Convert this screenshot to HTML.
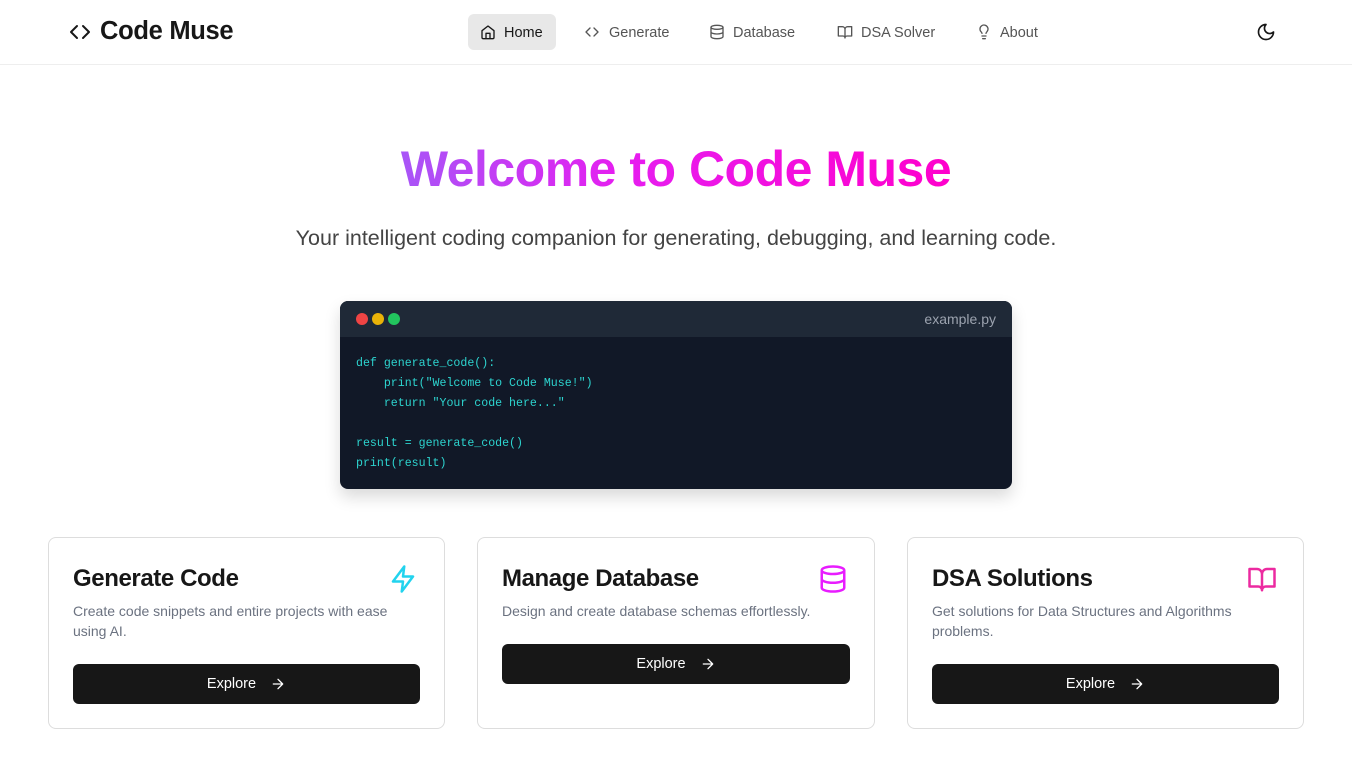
<!DOCTYPE html>
<html><head><meta charset="utf-8"><style>
*{box-sizing:border-box;margin:0;padding:0}
body{width:1352px;height:760px;overflow:hidden;background:#fff;font-family:"Liberation Sans",sans-serif;color:#171717}
header{height:65px;border-bottom:1px solid #eee;position:relative}
.logo{position:absolute;left:68px;top:17px;display:flex;align-items:center;gap:8px;font-size:25.5px;font-weight:bold;letter-spacing:-0.3px}
.nv{position:absolute;top:15px;height:36px;display:flex;align-items:center;font-size:14.5px;color:#555}
.nv svg{position:absolute;top:9px}
.pill{position:absolute;left:468px;top:14px;width:88px;height:36px;background:#e8e8e8;border-radius:6px}
.moon{position:absolute;left:1256px;top:22px}
h1{position:absolute;top:140px;width:100%;text-align:center;font-size:50px;font-weight:bold;letter-spacing:-0.5px}
h1 span{background:linear-gradient(90deg,#a855f7 0%,#e61ef0 40%,#ff00cc 100%);-webkit-background-clip:text;background-clip:text;color:transparent}
.sub{position:absolute;top:226px;width:100%;text-align:center;font-size:21.5px;color:#444}
.code{position:absolute;left:340px;top:301px;width:672px;height:188px;border-radius:8px;overflow:hidden;background:#111827;box-shadow:0 8px 16px rgba(0,0,0,.15)}
.ch{height:36px;background:#1f2937;position:relative}
.dot{position:absolute;top:12px;width:12px;height:12px;border-radius:50%}
.fn{position:absolute;right:16px;top:10px;font-size:14px;color:#9ca3af}
pre{padding:17px 16px;font-family:"Liberation Mono",monospace;font-size:11.6px;line-height:20px;color:#2dd4cf}
.card{position:absolute;top:537px;width:397px;height:192px;border:1px solid #ddd;border-radius:8px;padding:24px}
.card h3{font-size:24px;font-weight:600;letter-spacing:-0.4px;margin-top:3px}
.card p{font-size:14px;color:#6b7280;line-height:20px;margin-top:8px;height:40px}
.card p.one{height:20px}
.card .ic{position:absolute;right:26px;top:26px}
.btn{margin-top:23px;height:40px;background:#171717;color:#fff;border-radius:6px;display:flex;align-items:center;justify-content:center;gap:14px;font-size:14.5px}
</style></head><body>
<header>
<div class="logo"><svg width="24" height="24" viewBox="0 0 24 24" fill="none" stroke="#171717" stroke-width="2" stroke-linecap="round" stroke-linejoin="round"><path d="M9 6l-6 6 6 6M15 6l6 6-6 6"/></svg>Code Muse</div>
<div class="pill"></div>
<div class="nv" style="left:480px;color:#171717"><svg style="left:0" width="16" height="16" viewBox="0 0 24 24" fill="none" stroke="currentColor" stroke-width="2" stroke-linejoin="round"><path d="M3 10l9-7 9 7v10a2 2 0 0 1-2 2H5a2 2 0 0 1-2-2z"/><path d="M9 22v-8h6v8"/></svg><span style="margin-left:24px">Home</span></div>
<div class="nv" style="left:584px"><svg style="left:0" width="16" height="16" viewBox="0 0 24 24" fill="none" stroke="currentColor" stroke-width="2" stroke-linecap="round" stroke-linejoin="round"><path d="M9 6l-6 6 6 6M15 6l6 6-6 6"/></svg><span style="margin-left:25px">Generate</span></div>
<div class="nv" style="left:709px"><svg style="left:0" width="16" height="16" viewBox="0 0 24 24" fill="none" stroke="currentColor" stroke-width="2"><ellipse cx="12" cy="5" rx="9" ry="3"/><path d="M3 5v14c0 1.7 4 3 9 3s9-1.3 9-3V5M3 12c0 1.7 4 3 9 3s9-1.3 9-3"/></svg><span style="margin-left:24px">Database</span></div>
<div class="nv" style="left:837px"><svg style="left:0" width="16" height="16" viewBox="0 0 24 24" fill="none" stroke="currentColor" stroke-width="2" stroke-linejoin="round"><path d="M2 4h6a4 4 0 0 1 4 4v13a3 3 0 0 0-3-3H2zM22 4h-6a4 4 0 0 0-4 4v13a3 3 0 0 1 3-3h7z"/></svg><span style="margin-left:24px">DSA Solver</span></div>
<div class="nv" style="left:976px"><svg style="left:0" width="16" height="16" viewBox="0 0 24 24" fill="none" stroke="currentColor" stroke-width="2" stroke-linecap="round"><path d="M9 18h6M10 22h4M15 14c.2-1 .7-1.7 1.5-2.5A6 6 0 1 0 6 8c0 1 .2 2.2 1.5 3.5.7.7 1.3 1.5 1.5 2.5"/></svg><span style="margin-left:24px">About</span></div>
<svg class="moon" width="20" height="20" viewBox="0 0 24 24" fill="none" stroke="#171717" stroke-width="2" stroke-linejoin="round"><path d="M12 3a6 6 0 0 0 9 9 9 9 0 1 1-9-9z"/></svg>
</header>
<h1><span>Welcome to Code Muse</span></h1>
<div class="sub">Your intelligent coding companion for generating, debugging, and learning code.</div>
<div class="code"><div class="ch"><div class="dot" style="left:16px;background:#ef4444"></div><div class="dot" style="left:32px;background:#eab308"></div><div class="dot" style="left:48px;background:#22c55e"></div><div class="fn">example.py</div></div>
<pre>def generate_code():
    print("Welcome to Code Muse!")
    return "Your code here..."

result = generate_code()
print(result)</pre></div>
<div class="card" style="left:48px"><h3>Generate Code</h3><svg class="ic" width="30" height="30" viewBox="0 0 24 24" fill="none" stroke="#22d3ee" stroke-width="2" stroke-linejoin="round"><path d="M13 2L4 14h8l-1 8 9-12h-8z"/></svg><p>Create code snippets and entire projects with ease using AI.</p><div class="btn">Explore <svg width="16" height="16" viewBox="0 0 24 24" fill="none" stroke="#fff" stroke-width="2" stroke-linecap="round" stroke-linejoin="round"><path d="M5 12h14M12 5l7 7-7 7"/></svg></div></div>
<div class="card" style="left:477px;width:398px"><h3>Manage Database</h3><svg class="ic" width="30" height="30" viewBox="0 0 24 24" fill="none" stroke="#e81cff" stroke-width="2"><ellipse cx="12" cy="5" rx="9" ry="3"/><path d="M3 5v14c0 1.7 4 3 9 3s9-1.3 9-3V5M3 12c0 1.7 4 3 9 3s9-1.3 9-3"/></svg><p class="one">Design and create database schemas effortlessly.</p><div class="btn">Explore <svg width="16" height="16" viewBox="0 0 24 24" fill="none" stroke="#fff" stroke-width="2" stroke-linecap="round" stroke-linejoin="round"><path d="M5 12h14M12 5l7 7-7 7"/></svg></div></div>
<div class="card" style="left:907px"><h3>DSA Solutions</h3><svg class="ic" width="30" height="30" viewBox="0 0 24 24" fill="none" stroke="#ec2aa0" stroke-width="2" stroke-linejoin="round"><path d="M2 4h6a4 4 0 0 1 4 4v13a3 3 0 0 0-3-3H2zM22 4h-6a4 4 0 0 0-4 4v13a3 3 0 0 1 3-3h7z"/></svg><p>Get solutions for Data Structures and Algorithms problems.</p><div class="btn">Explore <svg width="16" height="16" viewBox="0 0 24 24" fill="none" stroke="#fff" stroke-width="2" stroke-linecap="round" stroke-linejoin="round"><path d="M5 12h14M12 5l7 7-7 7"/></svg></div></div>
</body></html>
